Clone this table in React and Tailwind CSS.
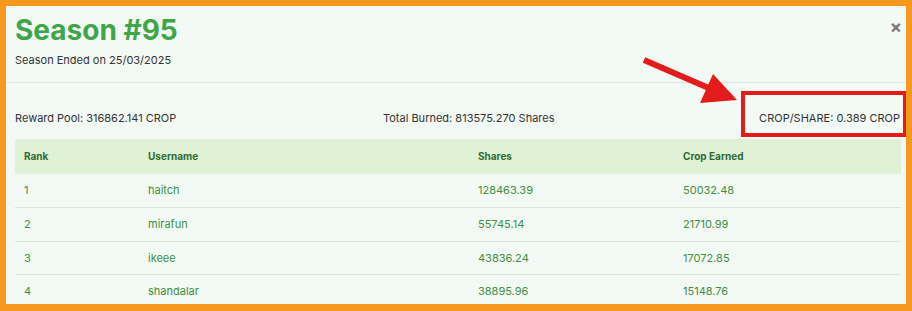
const rows = [
  { rank: 1, user: 'haitch', shares: '128463.39', crop: '50032.48' },
  { rank: 2, user: 'mirafun', shares: '55745.14', crop: '21710.99' },
  { rank: 3, user: 'ikeee', shares: '43836.24', crop: '17072.85' },
  { rank: 4, user: 'shandalar', shares: '38895.96', crop: '15148.76' },
]

export default function App() {
  return (
    <div className="w-[912px] h-[311px] bg-[#f7981f] pt-[6px] pl-[6px] pr-[6px] pb-[7px] overflow-hidden" style={{ fontFamily: 'Inter, "Noto Sans", sans-serif' }}>
      <div className="relative h-full bg-[#f3f9f4] overflow-hidden">
        <div className="px-[9px] pt-[8px] h-[77px] border-b border-[#dfe5e0]">
          <h1 className="text-[28px] leading-[32px] font-bold text-[#3fa64a]">Season #95</h1>
          <p className="mt-[7px] text-[11px] leading-[14px] text-[#333]">Season Ended on 25/03/2025</p>
        </div>
        <button className="absolute top-[12px] right-[4px] text-[#7a7a7a] text-[18px] font-bold leading-none">×</button>

        <div className="flex items-end justify-between pl-[9px] pr-[6px] h-[56px] pb-[14px] text-[11px] leading-[13px] text-[#333]">
          <span className="w-[368px]">Reward Pool: 316862.141 CROP</span>
          <span className="flex-1">Total Burned: 813575.270 Shares</span>
          <span>CROP/SHARE: 0.389 CROP</span>
        </div>

        <div className="px-[9px]">
          <table className="w-[886px] text-[11px] border-collapse">
            <thead>
              <tr className="bg-[#dff2d6] h-[35px] text-left text-[10px] font-bold text-[#2f6a31]">
                <th className="pl-[9px] w-[133px] font-bold">Rank</th>
                <th className="w-[330px] font-bold">Username</th>
                <th className="w-[205px] font-bold">Shares</th>
                <th className="font-bold">Crop Earned</th>
              </tr>
            </thead>
            <tbody>
              {rows.map(r => (
                <tr key={r.rank} className="h-[33.5px] border-b border-[#dde3de] text-[#3f8f45]">
                  <td className="pl-[9px]">{r.rank}</td>
                  <td>{r.user}</td>
                  <td>{r.shares}</td>
                  <td>{r.crop}</td>
                </tr>
              ))}
            </tbody>
          </table>
        </div>

        <div className="absolute left-[735px] top-[85px] w-[166px] h-[46px] border-[4px] border-[#e31b1b]" />
        <svg className="absolute left-0 top-0" width="906" height="298" viewBox="0 0 906 298">
          <line x1="638" y1="54" x2="705" y2="83" stroke="#e31b1b" strokeWidth="6" />
          <polygon points="707,68 731,94 694,97" fill="#e31b1b" />
        </svg>
      </div>
    </div>
  )
}
